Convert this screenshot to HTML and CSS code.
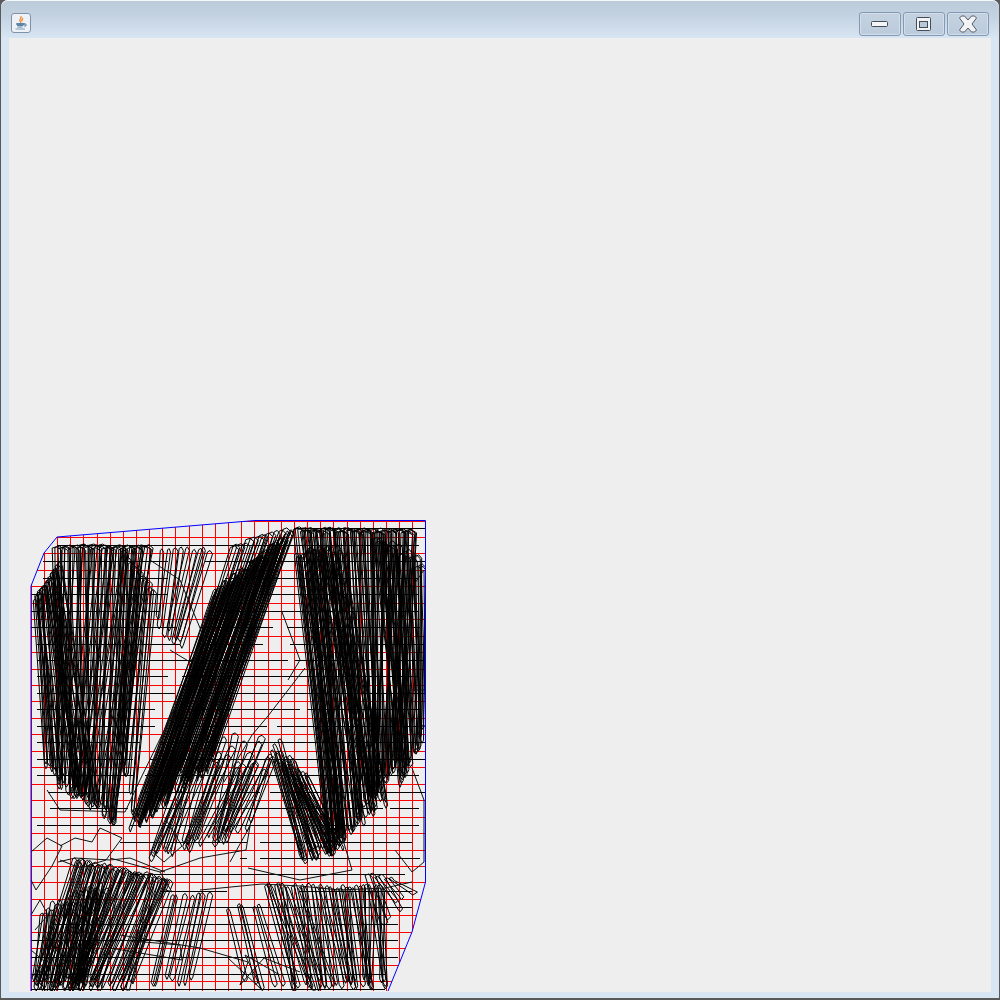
FILE: index.html
```html
<!DOCTYPE html>
<html lang="en">
<head>
  <meta charset="UTF-8">
  <title>Java window</title>
  <link rel="stylesheet" href="styles.css">
</head>
<body>
  <div class="window">
    <div class="titlebar">
      <div class="app-icon">
        <svg width="20" height="20" viewBox="0 0 20 20">
          <rect x="0.5" y="0.5" width="19" height="19" rx="2.5" fill="#eef2f6" stroke="#7f93a8"/>
          <path d="M10 3c1 2-2 3-1 5 .4 1 1 1.500 .8 2.500M12 5c-1 1-1.500 2-.8 3.500" fill="none" stroke="#ec8a2c" stroke-width="1.300"/>
          <path d="M5.500 10.500h8v1h-8zM6 12.500h6.500M6.500 14h5" fill="none" stroke="#5c87a8"/>
          <path d="M13.500 11h1.500v2h-2" fill="none" stroke="#5c87a8"/>
          <path d="M4.500 16h9.500" stroke="#7c9ab4" fill="none"/>
        </svg>
      </div>
      <div class="win-buttons">
        <div class="win-btn">
          <svg width="18" height="8" viewBox="0 0 18 8">
            <rect x="0.5" y="1.500" width="16" height="5" rx="1" fill="#f4f5f6" stroke="#454c58"/>
          </svg>
        </div>
        <div class="win-btn">
          <svg width="18" height="16" viewBox="0 0 18 16">
            <rect x="1.500" y="1.500" width="14" height="13" rx="1" fill="#f2f3f5" stroke="#454c58"/>
            <rect x="4.500" y="5.500" width="8" height="6" fill="#b9c8d8" stroke="#454c58"/>
          </svg>
        </div>
        <div class="win-btn">
          <svg width="20" height="18" viewBox="0 0 20 18">
            <path d="M1.500 3l2-2h3l3.500 4 3.500-4h3l2 2-4.500 6 4.500 6-2 2h-3l-3.500-4-3.500 4h-3l-2-2 4.500-6z" fill="#f2f3f5" stroke="#555c68"/>
          </svg>
        </div>
      </div>
    </div>
    <div class="client">
      <svg id="plot" class="plot" width="982" height="953" viewBox="9 38 982 953"></svg>
    </div>
  </div>
  <script src="script.js"></script>
</body>
</html>
```

FILE: styles.css
```css
html, body {
  margin: 0;
  padding: 0;
  background: #5a5a5a;
}
.window {
  width: 998px;
  height: 997px;
  margin: 0 1px;
  padding-top: 1px;
  border-radius: 7px 7px 0 0;
  background: #d8e5f3;
  box-shadow: inset 0 1px 0 #f4f8fb;
  display: flex;
  flex-direction: column;
}
.titlebar {
  height: 37px;
  padding: 0 10px 0 10px;
  border-radius: 7px 7px 0 0;
  background: linear-gradient(#bccbda, #c3d2e1 40%, #d8e5f3);
  display: flex;
  align-items: center;
  justify-content: space-between;
}
.app-icon {
  height: 20px;
  margin-top: 7px;
}
.win-buttons {
  display: flex;
  gap: 2px;
  margin-top: 8px;
}
.win-btn {
  width: 40px;
  height: 22px;
  border: 1px solid #8499b3;
  border-radius: 3px;
  background: linear-gradient(#c4d2e0, #bccbdc);
  box-shadow: inset 0 0 0 1px #d3deea;
  display: flex;
  align-items: center;
  justify-content: center;
}
.client {
  flex: 1;
  margin: 0 8px 6px 8px;
  background: #eeeeee;
}
.plot {
  display: block;
}
```

FILE: script.js
```js
// draws the blue hull, red grid, black scan lines and strip bundles
var svg = document.getElementById("plot");
var NS = "http://www.w3.org/2000/svg";
var seed = 48271;

function rnd() {
  seed = (seed * 16807) % 2147483647;
  return seed / 2147483647;
}

function add(parent, tag, attrs) {
  var el = document.createElementNS(NS, tag);
  for (var k in attrs) el.setAttribute(k, attrs[k]);
  parent.appendChild(el);
  return el;
}

var hull = "425.5,520.5 255,520.5 57,537 44,553 31,586 31,991 388,991 412,932 425.5,882";

var defs = add(svg, "defs", {});
var clip = add(defs, "clipPath", { id: "hullClip" });
add(clip, "polygon", { points: hull });

// red grid
var grid = add(svg, "g", { stroke: "#ff0000", "clip-path": "url(#hullClip)", "shape-rendering": "crispEdges" });
for (var i = 0; i <= 30; i++) {
  var x = Math.round(30.7 + 13.16 * i) + 0.5;
  add(grid, "line", { x1: x, y1: 520, x2: x, y2: 991 });
}
for (var j = 0; j <= 28; j++) {
  var y = Math.round(520.5 + 16.45 * j) + 0.5;
  add(grid, "line", { x1: 30, y1: y, x2: 426, y2: y });
}

// black scan lines: y, then x segments
var rows = [
  [528, 294, 425], [545, 57, 419], [561, 43, 168, 205, 425], [578, 43, 168, 225, 419],
  [594, 31, 168, 262, 419], [611, 31, 160, 215, 419], [627, 31, 177, 200, 273, 287, 420],
  [644, 37, 180, 200, 263, 290, 425], [660, 37, 193, 205, 288, 295, 425], [676, 37, 168, 182, 419],
  [693, 37, 175, 205, 300, 295, 425], [709, 37, 155, 190, 300, 307, 420], [726, 37, 155, 175, 267, 277, 420],
  [742, 37, 140, 160, 425], [759, 37, 133, 150, 425], [775, 37, 133, 145, 419],
  [792, 48, 130, 140, 260, 270, 425], [808, 50, 128, 135, 383, 390, 419], [825, 37, 123, 130, 419],
  [842, 120, 247, 260, 412], [858, 240, 247, 260, 420], [874, 130, 405], [891, 160, 227, 300, 412],
  [907, 160, 412], [924, 53, 398], [940, 31, 398], [957, 31, 398], [974, 31, 385], [989, 31, 385]
];
var scan = add(svg, "g", { stroke: "#000", "shape-rendering": "crispEdges" });
rows.forEach(function (r) {
  for (var s = 1; s < r.length; s += 2) {
    add(scan, "line", { x1: r[s], y1: r[0] + 0.5, x2: r[s + 1], y2: r[0] + 0.5 });
  }
});

// strip bundles: count, top x range, top y range, bottom x range, bottom y range,
// top width, bottom width, how far top and bottom may drift apart, jitter of the top y
var bundles = [
  [24, 33, 58, 596, 562, 45, 96, 770, 815, 6, 3, 0.24, 6],
  [38, 52, 146, 545, 546, 58, 112, 790, 825, 12, 3, 0.3, 4],
  [12, 118, 152, 546, 590, 116, 132, 740, 815, 9, 3, 0.2, 6],
  [58, 212, 291, 590, 527, 128, 212, 836, 770, 5, 2, 0.12, 8],
  [14, 228, 285, 545, 528, 140, 220, 830, 720, 9, 3, 0.2, 4],
  [60, 293, 410, 528, 530, 330, 402, 862, 760, 12, 3, 0.14, 4],
  [26, 293, 340, 550, 545, 328, 385, 855, 810, 6, 3, 0.2, 10],
  [24, 372, 422, 530, 560, 398, 422, 790, 740, 8, 3, 0.18, 14],
  [9, 160, 212, 548, 548, 155, 186, 630, 660, 5, 3, 0.1, 4],
  [30, 188, 272, 722, 738, 150, 250, 866, 835, 7, 3, 0.14, 40],
  [30, 270, 306, 730, 770, 300, 342, 866, 850, 6, 3, 0.2, 30],
  [48, 72, 168, 858, 878, 34, 132, 992, 992, 7, 3, 0.14, 5],
  [26, 40, 105, 905, 880, 33, 90, 992, 992, 6, 3, 0.16, 12],
  [36, 262, 384, 883, 886, 290, 384, 992, 992, 5, 3, 0.16, 5],
  [7, 168, 212, 892, 892, 150, 198, 992, 992, 5, 3, 0.1, 5],
  [5, 222, 266, 905, 905, 238, 290, 992, 992, 4, 3, 0.06, 5],
  [6, 362, 392, 872, 878, 378, 412, 930, 900, 8, 6, 0.1, 4]
];
var strips = add(svg, "g", { stroke: "#000", fill: "none", "stroke-linejoin": "miter", "clip-path": "url(#hullClip)" });
bundles.forEach(function (b) {
  for (var n = 0; n < b[0]; n++) {
    var t = (n + rnd() * 0.8) / b[0];
    var tb = Math.min(1, Math.max(0, t + (rnd() - 0.5) * b[11] * 2));
    var tx = b[1] + (b[2] - b[1]) * t, ty = b[3] + (b[4] - b[3]) * t + rnd() * b[12];
    var bx = b[5] + (b[6] - b[5]) * tb, by = b[7] + (b[8] - b[7]) * tb - rnd() * 14;
    var tw = b[9] * (0.6 + rnd() * 0.4), bw = b[10] * (0.6 + rnd() * 0.7);
    var p = [
      [tx, ty], [tx + tw * 0.5, ty - 1.5], [tx + tw, ty + 2],
      [bx + bw, by - 2], [bx + bw * 0.4, by + 1], [bx - bw * 0.3, by - 3]
    ];
    add(strips, "polygon", {
      points: p.map(function (q) { return q[0].toFixed(1) + "," + q[1].toFixed(1); }).join(" ")
    });
  }
});

// connecting outlines between the bundles
var blobs = [
  "31,852 47,838 62,846 52,866 36,890 31,880",
  "60,846 75,838 92,842 100,828 122,838 106,860 80,868 60,860",
  "110,858 160,872 200,858 246,850 250,826 230,862",
  "200,890 262,884 300,886 340,890 385,888 412,882",
  "165,818 182,846 164,862 150,850",
  "305,668 268,716 252,735 224,782",
  "282,612 300,660 288,680",
  "248,868 300,880 352,870 340,830",
  "31,915 40,900 48,915 35,930",
  "31,950 45,962 31,978",
  "120,935 200,948 248,962 240,985 264,958 300,972",
  "110,948 182,960 180,945 120,940",
  "412,768 424,800 424,862 412,872 395,850",
  "410,590 424,570 425,690 412,690",
  "47,790 60,810 125,812 140,780 176,706 168,720 138,800",
  "228,958 262,990 245,955 280,975",
  "150,560 180,580 205,640 190,662 170,650",
  "58,862 75,858 110,860 130,858 165,872",
  "160,872 172,892 160,888"
];
var outlines = add(svg, "g", { stroke: "#111", fill: "none" });
blobs.forEach(function (b) {
  add(outlines, "polyline", { points: b });
});

// blue hull on top
add(svg, "polyline", { points: "31,991 31,586 44,553 57,537 255,520.5 425.5,520.5 425.5,882 412,932 388,991", stroke: "#0000ff", fill: "none" });
```
